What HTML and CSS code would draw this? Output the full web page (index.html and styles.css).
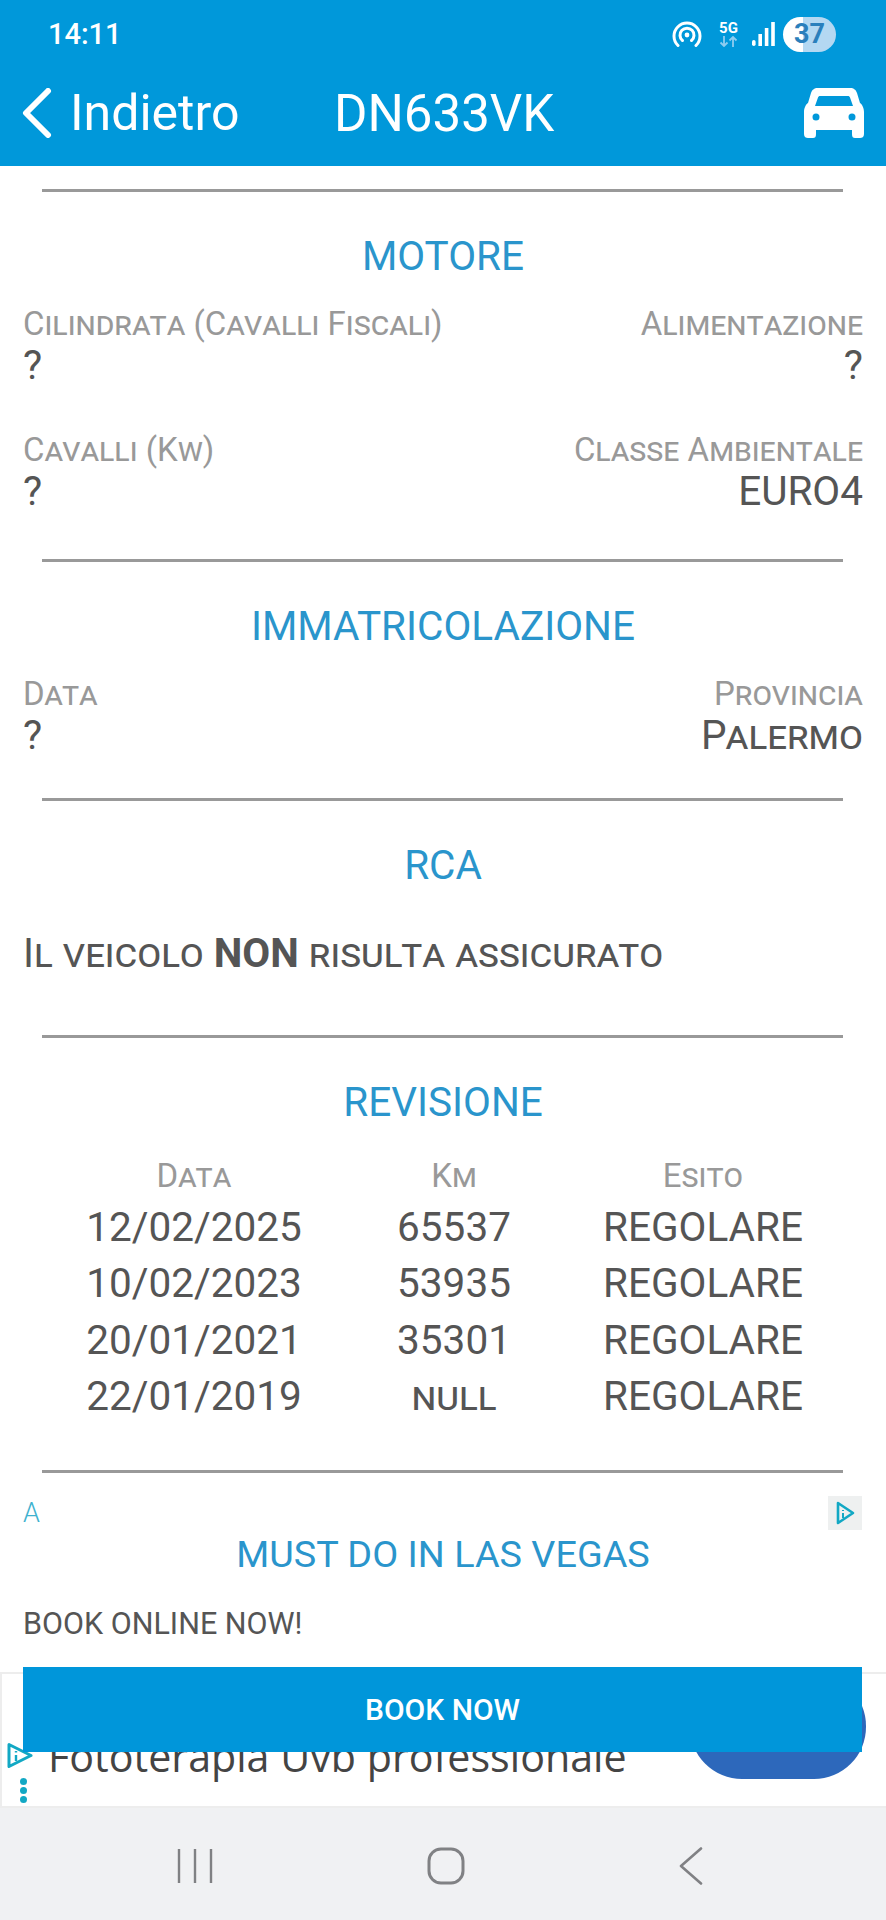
FILE: index.html
```html
<!DOCTYPE html>
<html lang="it">
<head>
  <meta charset="UTF-8">
  <title>DN633VK</title>
  <link rel="stylesheet" href="styles.css">
</head>
<body>

<div id="app">
  <header class="testata">
    <div class="stato">
      <span class="ora">14:11</span>
      <div class="icone-stato">
        <svg class="ico-hotspot" viewBox="0 0 30 26" width="30" height="26">
          <path d="M6 24.500 A13 13 0 1 1 24 24.500" fill="none" stroke="#fff" stroke-width="3" stroke-linecap="round"/>
          <path d="M10.500 19.500 A7 7 0 1 1 19.500 19.500" fill="none" stroke="#fff" stroke-width="3" stroke-linecap="round"/>
          <circle cx="15" cy="14" r="2.400" fill="#fff"/>
        </svg>
        <div class="ico-5g">
          <span>5G</span>
          <svg viewBox="0 0 20 11" width="20" height="11">
            <path d="M5 0V10M1.500 6.500L5 10L8.500 6.500" fill="none" stroke="#8fcdf0" stroke-width="1.800"/>
            <path d="M14 11V1M10.500 4.500L14 1L17.500 4.500" fill="none" stroke="#8fcdf0" stroke-width="1.800"/>
          </svg>
        </div>
        <svg class="ico-segnale" viewBox="0 0 23 24" width="23" height="24">
          <rect x="0" y="18" width="3.600" height="6" rx="1.800" fill="#fff"/>
          <rect x="6.400" y="12" width="3.600" height="12" fill="#fff"/>
          <rect x="12.800" y="6" width="3.600" height="18" fill="#fff"/>
          <rect x="19.200" y="0" width="3.600" height="24" fill="#fff"/>
        </svg>
        <div class="batteria">37</div>
      </div>
    </div>
    <div class="barra">
      <div class="indietro">
        <svg viewBox="0 0 30 50" width="30" height="50">
          <path d="M26 3L4 25L26 47" fill="none" stroke="#fff" stroke-width="6" stroke-linecap="round" stroke-linejoin="round"/>
        </svg>
        <span>Indietro</span>
      </div>
      <div class="targa">DN633VK</div>
      <svg class="ico-auto" viewBox="0 0 60 50" width="60" height="50">
        <path fill="#fff" fill-rule="evenodd" d="M14 0H46C50 0 52 2 53 5L56 15C58 16 60 20 60 24V46C60 49 58 50 56 50H51C49 50 48 49 48 46V42H12V46C12 49 11 50 9 50H4C2 50 0 49 0 46V24C0 20 2 16 4 15L7 5C8 2 10 0 14 0ZM16 8C15 8 14.500 8.500 14 9.500L11 18H49L46 9.500C45.500 8.500 45 8 44 8ZM12 25.500A3.500 3.500 0 1 0 12 32.500A3.500 3.500 0 1 0 12 25.500ZM48 25.500A3.500 3.500 0 1 0 48 32.500A3.500 3.500 0 1 0 48 25.500Z"/>
      </svg>
    </div>
  </header>

  <main class="scheda">
    <hr class="linea prima">

    <section class="blocco">
      <h2>MOTORE</h2>
      <div class="griglia ampia">
        <div class="campo">
          <div class="etichetta">Cilindrata (Cavalli Fiscali)</div>
          <div class="valore">?</div>
        </div>
        <div class="campo destra">
          <div class="etichetta">Alimentazione</div>
          <div class="valore">?</div>
        </div>
        <div class="campo">
          <div class="etichetta">Cavalli (Kw)</div>
          <div class="valore">?</div>
        </div>
        <div class="campo destra">
          <div class="etichetta">Classe Ambientale</div>
          <div class="valore">EURO4</div>
        </div>
      </div>
    </section>
    <hr class="linea">

    <section class="blocco">
      <h2>IMMATRICOLAZIONE</h2>
      <div class="griglia">
        <div class="campo">
          <div class="etichetta">Data</div>
          <div class="valore">?</div>
        </div>
        <div class="campo destra">
          <div class="etichetta">Provincia</div>
          <div class="valore">Palermo</div>
        </div>
      </div>
    </section>
    <hr class="linea">

    <section class="blocco">
      <h2>RCA</h2>
      <p class="avviso">Il veicolo <b>NON</b> risulta assicurato</p>
    </section>
    <hr class="linea">

    <section class="blocco">
      <h2>REVISIONE</h2>
      <div class="revisioni">
        <div class="etichetta">Data</div><div class="etichetta">Km</div><div class="etichetta">Esito</div>
        <div class="valore">12/02/2025</div><div class="valore">65537</div><div class="valore">REGOLARE</div>
        <div class="valore">10/02/2023</div><div class="valore">53935</div><div class="valore">REGOLARE</div>
        <div class="valore">20/01/2021</div><div class="valore">35301</div><div class="valore">REGOLARE</div>
        <div class="valore">22/01/2019</div><div class="valore">null</div><div class="valore">REGOLARE</div>
      </div>
    </section>
    <hr class="linea">

    <section class="annuncio">
      <div class="annuncio-top">
        <span class="lettera">A</span>
        <div class="adchoice">
          <svg viewBox="0 0 20 26" width="20" height="26">
            <path d="M3 3L18 13L3 23Z" fill="none" stroke="#12a8c4" stroke-width="2.600" stroke-linejoin="round"/>
            <path d="M8 10V11M8 13V18" stroke="#12a8c4" stroke-width="2"/>
          </svg>
        </div>
      </div>
      <h2>MUST DO IN LAS VEGAS</h2>
      <p class="sottotitolo">BOOK ONLINE NOW!</p>
      <div class="bottone">BOOK NOW</div>
    </section>
  </main>

  <div class="banner">
    <div class="banner-ico">
      <svg viewBox="0 0 27 27" width="27" height="27">
        <path d="M3 2.500L25 13.500L3 24.500Z" fill="none" stroke="#12a8c4" stroke-width="3" stroke-linejoin="round"/>
        <path d="M10 9V10.500M10 13V19" stroke="#12a8c4" stroke-width="2.400"/>
      </svg>
      <div class="puntini"><i></i><i></i><i></i></div>
    </div>
    <span class="banner-testo">Fototerapia Uvb professionale</span>
    <div class="banner-cta"></div>
  </div>

  <nav class="navbar">
    <svg viewBox="0 0 36 36" width="36" height="36">
      <path d="M2 1V35M18 1V35M34 1V35" fill="none" stroke="#808184" stroke-width="2.400"/>
    </svg>
    <svg viewBox="0 0 38 38" width="38" height="38">
      <rect x="2" y="2" width="34" height="34" rx="12" fill="none" stroke="#808184" stroke-width="3"/>
    </svg>
    <svg viewBox="0 0 26 38" width="26" height="38">
      <path d="M23 1.500L3 19L23 36.500" fill="none" stroke="#808184" stroke-width="2.600" stroke-linecap="round" stroke-linejoin="round"/>
    </svg>
  </nav>
</div>

</body>
</html>
```

FILE: styles.css
```css
* {
  box-sizing: border-box;
}

html, body {
  margin: 0;
  padding: 0;
}

body {
  font-family: Roboto, "Liberation Sans", sans-serif;
  background: #fff;
}

#app {
  width: 886px;
  height: 1920px;
  display: flex;
  flex-direction: column;
  overflow: hidden;
}

/* Testata */
.testata {
  height: 166px;
  background: #0098da;
  color: #fff;
  flex: none;
}

.stato {
  height: 68px;
  display: flex;
  justify-content: space-between;
  align-items: center;
  padding: 0 50px 0 48px;
}

.ora {
  font-size: 29px;
  font-weight: 500;
}

.icone-stato {
  display: flex;
  align-items: center;
}

.ico-hotspot {
  margin-right: 15px;
}

.ico-5g {
  display: flex;
  flex-direction: column;
  align-items: center;
  width: 23px;
  margin-right: 12px;
}

.ico-5g span {
  font-size: 15px;
  font-weight: 700;
  line-height: 15px;
}

.ico-segnale {
  margin-right: 8px;
}

.batteria {
  width: 53px;
  height: 35px;
  border-radius: 18px;
  background: linear-gradient(90deg, #fff 0 38%, #b4d8f2 38%);
  color: #2a7fbc;
  font-size: 27px;
  font-weight: 700;
  line-height: 35px;
  text-align: center;
}

.barra {
  display: flex;
  align-items: center;
  height: 90px;
  padding: 0 22px 0 22px;
}

.indietro {
  display: flex;
  align-items: center;
  gap: 18px;
  width: 312px;
  font-size: 50px;
  font-weight: 400;
}

.targa {
  flex: 1;
  font-size: 51px;
  font-weight: 400;
}

/* Scheda */
.scheda {
  flex: 1;
  min-height: 0;
  padding: 0 23px;
}

.linea {
  height: 3px;
  margin: 0 20px 0 19px;
  background: #999;
  border: 0;
}

.linea.prima {
  margin-top: 23px;
}

h2 {
  margin: 0;
  color: #2a95cc;
  font-size: 40.500px;
  font-weight: 400;
  line-height: 44px;
  text-align: center;
}

.blocco {
  padding-top: 42px;
}

.griglia {
  display: grid;
  grid-template-columns: 1fr 1fr;
  row-gap: 43px;
  padding: 26px 0 41px;
}

.griglia.ampia {
  padding-bottom: 46px;
}

.etichetta {
  color: #999;
  font-size: 33px;
  font-variant: small-caps;
  line-height: 40px;
  white-space: nowrap;
}

.valore {
  color: #555;
  font-size: 40.500px;
  font-variant: small-caps;
  line-height: 43px;
  white-space: nowrap;
}

.destra {
  text-align: right;
}

.avviso {
  margin: 0;
  padding: 44px 0 60px;
  color: #555;
  font-size: 40.500px;
  font-variant: small-caps;
  line-height: 44px;
}

.revisioni {
  display: grid;
  grid-template-columns: 342px 178px 1fr;
  text-align: center;
  padding: 32px 0 46px;
}

.revisioni .valore {
  line-height: 56.300px;
}

.revisioni .etichetta {
  margin-bottom: 3px;
}

/* Annuncio */
.annuncio-top {
  display: flex;
  justify-content: space-between;
  align-items: center;
  padding-top: 23px;
}

.lettera {
  color: #3fb2cf;
  font-size: 27px;
  font-weight: 300;
}

.adchoice {
  width: 34px;
  height: 34px;
  margin-right: 1px;
  background: #eef0f0;
  display: flex;
  align-items: center;
  justify-content: center;
}

.annuncio h2 {
  font-size: 37.800px;
  margin-top: 2px;
}

.sottotitolo {
  margin: 31px 0 0;
  color: #555;
  font-size: 30.500px;
  line-height: 34px;
}

/* il bottone copre il banner sotto */
.bottone {
  position: relative;
  z-index: 2;
  height: 85px;
  margin: 26px 1px 0 0;
  background: #0096da;
  color: #fff;
  font-size: 30px;
  font-weight: 500;
  line-height: 85px;
  text-align: center;
}

/* Banner */
.banner {
  height: 136px;
  flex: none;
  display: flex;
  align-items: flex-end;
  padding: 0 20px 27px 4px;
  background: #fff;
  border: 2px solid #ededed;
  border-right: 0;
  position: relative;
}

.banner-ico {
  position: absolute;
  left: 4px;
  bottom: 3px;
}

.puntini {
  display: flex;
  flex-direction: column;
  gap: 2px;
  margin: 5px 0 0 14px;
}

.puntini i {
  width: 7px;
  height: 7px;
  border-radius: 50%;
  background: #12a8c4;
}

.banner-testo {
  margin-left: 42px;
  flex: 1;
  color: #444;
  font-family: "Open Sans", sans-serif;
  font-size: 41.200px;
  line-height: 46px;
}

.banner-cta {
  width: 176px;
  height: 105px;
  margin-bottom: 0;
  background: #2d68bb;
  border-radius: 52px;
}

/* Barra di navigazione */
.navbar {
  height: 112px;
  flex: none;
  display: flex;
  align-items: center;
  background: #f0f1f3;
  padding: 4px 182px 0 177px;
  justify-content: space-between;
}
```
